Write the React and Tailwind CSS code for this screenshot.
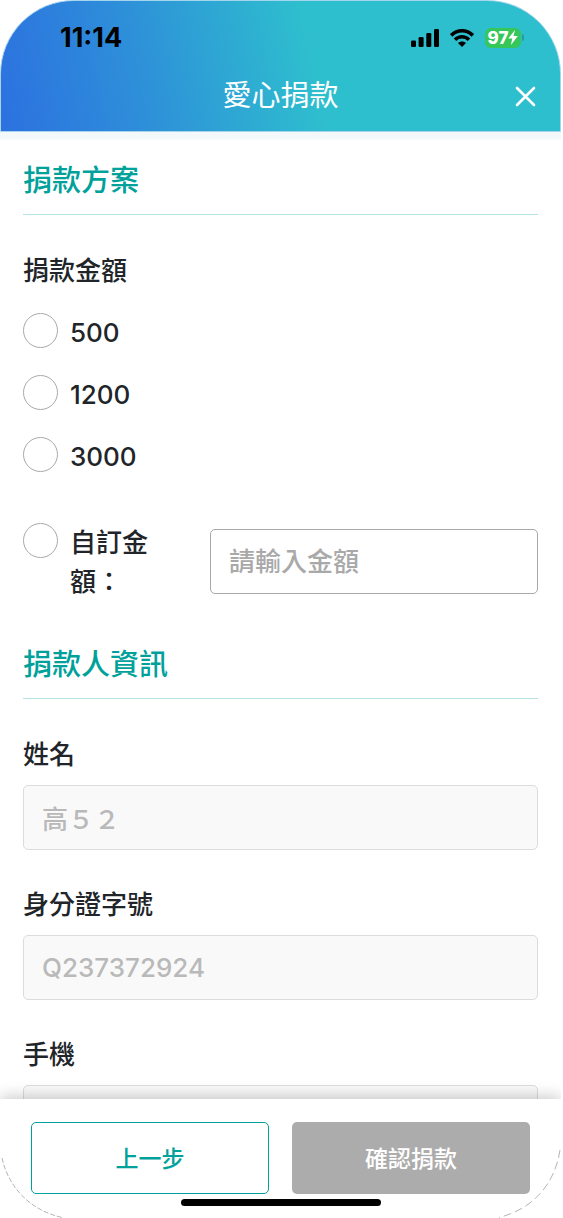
import React from "react";

const PRESETS = [500, 1200, 3000];

function StatusBar() {
  return (
    <div className="flex h-[73px] items-center justify-between pr-9 pl-[59px] text-black">
      <span className="text-[27px] leading-8 font-bold">11:14</span>
      <div className="flex items-center">
        <svg width="28" height="18" viewBox="0 0 28 18" aria-hidden="true">
          <rect x="0" y="11.5" width="5" height="6.5" rx="1.2" />
          <rect x="7.6" y="8" width="5" height="10" rx="1.2" />
          <rect x="15.3" y="4" width="5" height="14" rx="1.2" />
          <rect x="23" y="0" width="5" height="18" rx="1.2" />
        </svg>
        <svg className="ml-[11px]" width="24" height="18" viewBox="0 0 24 18" aria-hidden="true">
          <g fill="none" stroke="black" strokeWidth="3.6">
            <path d="M1.2 6.4C7.4 0.2 16.6 0.2 22.8 6.4" />
            <path d="M5 10.8C9 6.8 15 6.8 19 10.8" />
          </g>
          <path d="M8 14C10.3 12 13.7 12 16 14L12 18Z" />
        </svg>
        <div className="ml-[11px] flex h-5 w-9 items-center justify-center rounded-md bg-[#35c759] text-white">
          <span className="text-[17px] leading-5 font-extrabold">97</span>
          <svg width="10" height="15" viewBox="0 0 9 14" fill="currentColor" aria-hidden="true">
            <path d="M6.4 0L0 8H3.8L2.6 14L9 5.6H5Z" />
          </svg>
        </div>
        <span className="ml-px h-[7px] w-[2px] rounded-r-full bg-[#259aa5]" />
      </div>
    </div>
  );
}

function SectionTitle({ children }) {
  return (
    <h2 className="border-b border-[#b5e3e1] pb-[11px] text-[29px] leading-[44px] font-medium text-[#00a19b]">
      {children}
    </h2>
  );
}

const radioClass =
  "m-0 size-[35px] shrink-0 appearance-none rounded-full border border-[#a9a9a9] bg-white checked:border-[10px] checked:border-[#00a19b]";

function LockedField({ id, label, value }) {
  return (
    <div className="mb-[35px]">
      <label htmlFor={id} className="block leading-10">
        {label}
      </label>
      <input
        id={id}
        type="text"
        disabled
        defaultValue={value}
        className="mt-[10px] block h-[65px] w-full rounded-[5px] border border-[#dcdcdc] bg-[#f9f9f9] px-[18px] text-[#b9b9b9]"
      />
    </div>
  );
}

export default function App() {
  return (
    <div className="relative mr-0.5 flex h-screen flex-col overflow-hidden bg-white font-['Inter','Noto_Sans_CJK_TC',sans-serif] text-[26px] font-medium text-[#212529]">
      <header className="rounded-t-[74px] border border-[#a5d5ec] bg-[linear-gradient(78deg,#2c71e0_0%,#2e8fd9_25%,#2ebfce_56%)]">
        <StatusBar />
        <div className="mb-[13px] grid h-11 grid-cols-[1fr_auto_1fr] items-center text-white">
          <h1 className="col-start-2 text-[29px] leading-[44px] font-normal">愛心捐款</h1>
          <button type="button" aria-label="關閉" className="mr-6 justify-self-end">
            <svg width="21" height="21" viewBox="0 0 21 21" fill="none" stroke="currentColor" strokeWidth="2.6" strokeLinecap="round" aria-hidden="true">
              <path d="M2 2L19 19M19 2L2 19" />
            </svg>
          </button>
        </div>
      </header>

      <main className="min-h-0 flex-1 overflow-y-auto bg-[linear-gradient(#f3f8fb_0px,#f3f8fb_6px,#ffffff_9px)] px-[23px] [scrollbar-width:none]">
        <section className="pt-[27px]">
          <SectionTitle>捐款方案</SectionTitle>
          <fieldset className="mt-9 min-w-0">
            <legend className="leading-10">捐款金額</legend>
            <div className="mt-[22px] flex flex-col gap-[22px]">
              {PRESETS.map((amount) => (
                <label key={amount} className="flex gap-3 leading-10">
                  <input type="radio" name="amount" value={amount} className={radioClass} />
                  {amount}
                </label>
              ))}
            </div>
            <div className="mt-[46px] flex items-start">
              <label className="flex w-[187px] shrink-0 gap-3 leading-[39px]">
                <input type="radio" name="amount" value="custom" className={radioClass} />
                <span className="w-[90px]">自訂金額：</span>
              </label>
              <input
                type="text"
                inputMode="numeric"
                aria-label="自訂金額"
                placeholder="請輸入金額"
                className="mt-[6px] h-[65px] min-w-0 flex-1 rounded-[5px] border border-[#a9a9a9] bg-white px-[18px] placeholder:text-[#a9a9a9]"
              />
            </div>
          </fieldset>
        </section>

        <section className="pt-[42px]">
          <SectionTitle>捐款人資訊</SectionTitle>
          <div className="mt-9">
            <LockedField id="name" label="姓名" value="高５２" />
            <LockedField id="national-id" label="身分證字號" value="Q237372924" />
            <LockedField id="mobile" label="手機" value="" />
          </div>
        </section>
      </main>

      <footer className="relative bg-white px-[31px] pt-[23px] pb-3 shadow-[0_-3px_14px_rgba(0,0,0,0.2)]">
        <div className="grid grid-cols-2 gap-[23px] text-[23px]">
          <button type="button" className="h-[72px] rounded-[5px] border border-[#00a19b] bg-white pt-0.5 text-[#00a19b]">
            上一步
          </button>
          <button type="button" className="h-[72px] rounded-[5px] bg-[#acacac] pt-0.5 text-white">
            確認捐款
          </button>
        </div>
        <div className="mx-auto mt-[5px] h-[7px] w-[200px] rounded-full bg-black" />
        <svg className="absolute bottom-0 left-0" width="78" height="78" viewBox="0 0 78 78" fill="none" stroke="#b5b5b5" strokeDasharray="5 2" aria-hidden="true">
          <path d="M2 18C8 46 29 70 62 77.5" />
        </svg>
        <svg className="absolute right-0 bottom-0" width="78" height="78" viewBox="0 0 78 78" fill="none" stroke="#b5b5b5" strokeDasharray="8 4" aria-hidden="true">
          <path d="M77 10C72 44 50 69 16 77.5" />
        </svg>
      </footer>
    </div>
  );
}
